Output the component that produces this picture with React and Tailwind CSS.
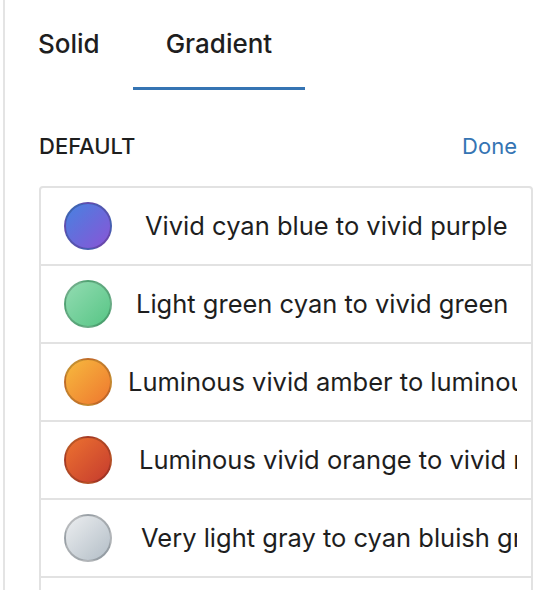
import React from "react";

const rows = [
  {
    label: "Vivid cyan blue to vivid purple",
    bg: "bg-[linear-gradient(135deg,#4782e0_0%,#8a54d6_100%)]",
    ml: "ml-[33px]",
  },
  {
    label: "Light green cyan to vivid green",
    bg: "bg-[linear-gradient(135deg,#93dcb2_0%,#57c585_100%)]",
    ml: "ml-[24px]",
  },
  {
    label: "Luminous vivid amber to luminous vivid orange",
    bg: "bg-[linear-gradient(135deg,#f7ba3e_0%,#ee772f_100%)]",
    ml: "ml-[16px]",
  },
  {
    label: "Luminous vivid orange to vivid red",
    bg: "bg-[linear-gradient(135deg,#ec7230_0%,#c53b2e_100%)]",
    ml: "ml-[27px]",
  },
  {
    label: "Very light gray to cyan bluish gray",
    bg: "bg-[linear-gradient(135deg,#eceef0_0%,#b3bec7_100%)]",
    ml: "ml-[29px]",
  },
  {
    label: "Cool to warm spectrum",
    bg: "bg-[linear-gradient(135deg,#4aeadc_0%,#fe6c2c_100%)]",
    ml: "ml-[29px]",
  },
];

export default function App() {
  return (
    <div
      className="w-[558px] h-[590px] overflow-hidden bg-white flex text-[#1e1e1e]"
      style={{ fontFamily: "Inter, 'Noto Sans', sans-serif" }}
    >
      <div className="ml-[3px] w-[2px] h-full shrink-0 bg-[#e4e4e4]" />
      <div className="flex-1 flex flex-col">
        <div className="flex h-[90px] shrink-0">
          <div className="h-full px-[33px] flex items-center border-b-[3px] border-transparent text-[26px] font-medium">
            Solid
          </div>
          <div className="h-full px-[33px] flex items-center border-b-[3px] border-[#3574b3] text-[26px] font-medium">
            Gradient
          </div>
        </div>
        <div className="mt-[30px] h-[52px] shrink-0 ml-[34px] w-[494px] flex items-center justify-between">
          <span className="text-[22px] font-medium uppercase">Default</span>
          <span className="text-[22px] text-[#3574b3] mr-[16px]">Done</span>
        </div>
        <div className="mt-[14px] shrink-0 ml-[34px] w-[494px] border-2 border-[#e2e2e2] rounded-[4px]">
          {rows.map((r) => (
            <div
              key={r.label}
              className="h-[78px] flex items-center border-b-2 border-[#e2e2e2]"
            >
              <div
                className={`ml-[23px] w-12 h-12 shrink-0 rounded-full border-2 border-black/20 ${r.bg}`}
              />
              <div className="flex-1 mr-[14px] overflow-hidden">
                <div className={`whitespace-nowrap text-[25.5px] ${r.ml}`}>
                  {r.label}
                </div>
              </div>
            </div>
          ))}
        </div>
      </div>
    </div>
  );
}
